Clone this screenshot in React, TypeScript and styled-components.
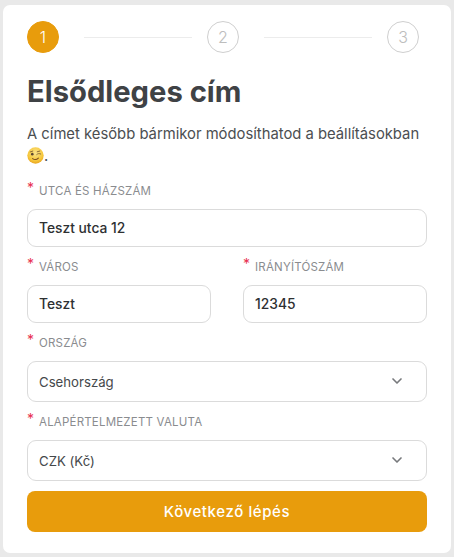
import styled, { createGlobalStyle } from 'styled-components';
import { ChevronDown } from 'lucide-react';

const Global = createGlobalStyle`
  html, body { margin: 0; padding: 0; background: #e9e9e9; }
  body { font-family: Inter, "Open Sans", sans-serif; }
  * { box-sizing: border-box; }
`;

const Page = styled.div`
  width: 454px;
  height: 557px;
  padding: 5px 3px 4px;
`;

const Card = styled.form`
  height: 548px;
  padding: 16px 24px 0;
  background: #fff;
  border-radius: 7px;
`;

const Steps = styled.div`
  display: flex;
  align-items: center;
  height: 32px;
`;

const Circle = styled.span<{ $active?: boolean }>`
  flex-shrink: 0;
  width: 32px;
  height: 32px;
  display: inline-flex;
  align-items: center;
  justify-content: center;
  border-radius: 50%;
  border: 1px solid ${({ $active }) => ($active ? '#e89c0c' : '#cfcfcf')};
  background: ${({ $active }) => ($active ? '#e89c0c' : '#fff')};
  color: ${({ $active }) => ($active ? '#fff' : '#bdbdbd')};
  font-size: 16px;
  font-weight: 300;
`;

const StepLine = styled.span`
  width: 108px;
  height: 1px;
  margin: 0 15px 0 25px;
  background: #ececec;
`;

const Title = styled.h1`
  margin: 21px 0 0;
  font-size: 29.2px;
  line-height: 36px;
  font-weight: 700;
  color: #3f4245;
`;

const Intro = styled.p`
  margin: 13px 0 0;
  font-size: 14.8px;
  line-height: 22px;
  color: #4b4e51;
`;

const Wink = styled.svg`
  width: 17px;
  height: 17px;
  vertical-align: -3px;
`;

const Fields = styled.div`
  margin-top: 4px;
`;

const Row = styled.div`
  display: grid;
  grid-template-columns: 1fr 1fr;
  column-gap: 32px;
`;

const Field = styled.div`
  display: flex;
  flex-direction: column;
`;

const Label = styled.label`
  display: flex;
  height: 38px;
  padding-top: 12px;
  font-size: 11.5px;
  font-weight: 400;
  line-height: 16px;
  letter-spacing: 0.2px;
  text-transform: uppercase;
  color: #8a8c8f;
`;

const Star = styled.span`
  width: 12px;
  margin-top: -3px;
  font-size: 14px;
  color: #e8304f;
`;

const Control = styled.div<{ $tall?: boolean }>`
  display: flex;
  align-items: center;
  justify-content: space-between;
  height: ${({ $tall }) => ($tall ? '41px' : '38px')};
  padding: 0 21px 0 11px;
  background: #fff;
  border: 1px solid #dbdbdb;
  border-radius: 9px;
  font-size: ${({ $tall }) => ($tall ? '13.2px' : '13.8px')};
  font-weight: ${({ $tall }) => ($tall ? 400 : 450)};
  color: ${({ $tall }) => ($tall ? '#45484b' : '#2e3032')};

  svg {
    margin-top: -2px;
    color: #77797c;
  }
`;

const Submit = styled.button`
  width: 100%;
  height: 41px;
  margin-top: 10px;
  border: 0;
  border-radius: 8px;
  background: #e89c0c;
  color: #fff;
  font-family: inherit;
  font-size: 15px;
  font-weight: 500;
  letter-spacing: 0.6px;
`;

const WinkIcon = () => (
  <Wink viewBox="0 0 20 20" aria-hidden="true">
    <defs>
      <radialGradient id="winkFace" cx="50%" cy="35%" r="65%">
        <stop offset="0%" stopColor="#fbe38a" />
        <stop offset="70%" stopColor="#f6c83c" />
        <stop offset="100%" stopColor="#e9a521" />
      </radialGradient>
    </defs>
    <circle cx="10" cy="10" r="9.6" fill="url(#winkFace)" />
    <circle cx="6.2" cy="8.4" r="1.5" fill="#5b4630" />
    <path d="M11.5 8.8c1.2-1.2 3-1.4 4.6-.6M12 5.6l3-.8M3.8 5.8l3-1" stroke="#7a5a30" strokeWidth="1" fill="none" strokeLinecap="round" />
    <path d="M6.6 13.6c2.2 1.6 4.8 1.4 6.8-.6" stroke="#7a4a20" strokeWidth="1.2" fill="none" strokeLinecap="round" />
  </Wink>
);

const FormField = ({ label, value, select }: { label: string; value: string; select?: boolean }) => (
  <Field>
    <Label>
      <Star>*</Star>
      {label}
    </Label>
    <Control $tall={select}>
      {value}
      {select && <ChevronDown size={16} strokeWidth={2.5} />}
    </Control>
  </Field>
);

export default function App() {
  return (
    <Page>
      <Global />
      <Card>
        <Steps>
          <Circle $active>1</Circle>
          <StepLine />
          <Circle>2</Circle>
          <StepLine />
          <Circle>3</Circle>
        </Steps>
        <Title>Elsődleges cím</Title>
        <Intro>
          A címet később bármikor módosíthatod a beállításokban <WinkIcon />.
        </Intro>
        <Fields>
          <FormField label="Utca és házszám" value="Teszt utca 12" />
          <Row>
            <FormField label="Város" value="Teszt" />
            <FormField label="Irányítószám" value="12345" />
          </Row>
          <FormField label="Ország" value="Csehország" select />
          <FormField label="Alapértelmezett valuta" value="CZK (Kč)" select />
        </Fields>
        <Submit type="button">Következő lépés</Submit>
      </Card>
    </Page>
  );
}
